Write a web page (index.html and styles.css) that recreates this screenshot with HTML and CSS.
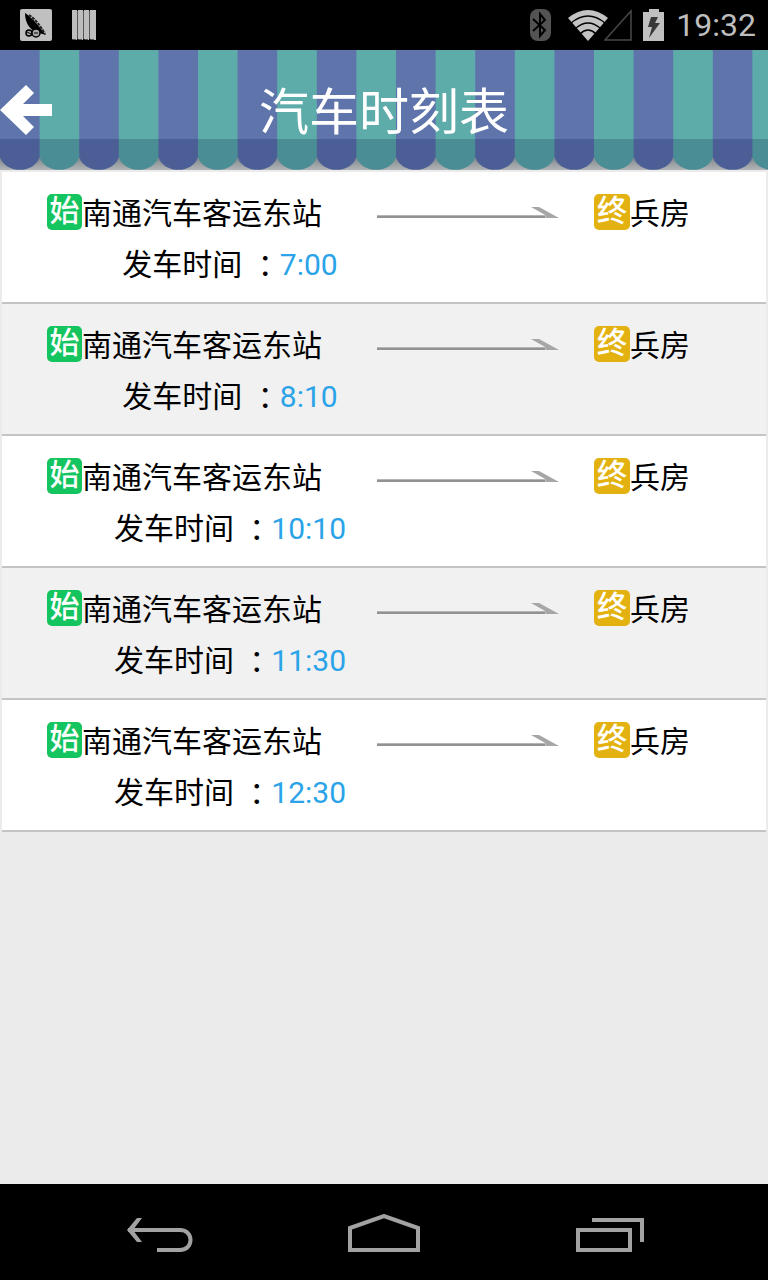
FILE: index.html
```html
<!DOCTYPE html>
<html lang="zh-CN">
<head>
<meta charset="utf-8">
<meta name="viewport" content="width=device-width, initial-scale=1">
<title>汽车时刻表</title>
<link rel="stylesheet" href="styles.css">
</head>
<body>
<svg class="defs" width="0" height="0" aria-hidden="true">
  <symbol id="arrow" viewBox="0 0 182 16">
    <path fill="#b4b4b4" d="M0 9H172V11H0z"/>
    <path fill="#929292" d="M0 10H168V12H0z"/>
    <path fill="#a6a6a6" d="M154 1H162L182 12H168L170 10z"/>
  </symbol>
</svg>

<div class="status">
  <div class="status-group">
    <svg class="icon-app" width="34" height="34" viewBox="0 0 34 34" aria-hidden="true">
      <rect x="1" y="1" width="32" height="32" rx="2" fill="#c0c0c0"/>
      <path fill="#000" d="M6 5C9 7 14 11 18 16L27 27 20 25C12 23 6 16 6 5z"/>
      <path fill="none" stroke="#222" stroke-width="2" stroke-dasharray="3 1" d="M10 7C16 11 21 17 26 26"/>
      <circle cx="10" cy="25" r="3" fill="#aaa" stroke="#000" stroke-width="1.5"/>
      <circle cx="17" cy="25" r="4" fill="#aaa" stroke="#000" stroke-width="1.5"/>
      <path stroke="#000" d="M8 24l4 2M15 25H19"/>
    </svg>
    <svg width="24" height="30" viewBox="0 0 24 30" aria-hidden="true">
      <path fill="#bdbdbd" d="M0 0H5V30H2L0 29zM6 0H11V30H8L6 29zM12 0H17V30H14L12 29zM18 0H24V30H20L18 29z"/>
      <path stroke="#555" d="M5.500 1V29M11.500 1V29M17.500 1V29M1 29.500H4M7 29.500H10M13 29.500H16M19 29.500H22"/>
    </svg>
  </div>
  <div class="status-group status-right">
    <svg class="icon-bt" width="22" height="32" viewBox="0 0 22 32" aria-hidden="true">
      <rect x="1" width="21" height="32" rx="8" fill="#535353"/>
      <path fill="none" stroke="#000" stroke-width="2" d="M4 10L16 21 11 27V5L16 11 4 22"/>
    </svg>
    <svg class="icon-wifi" width="40" height="32" viewBox="0 0 40 32" aria-hidden="true">
      <path fill="#c3c3c3" d="M0 9Q20-7 40 9L20 32z"/>
      <path fill="none" stroke="#000" stroke-width="1.500" d="M3 14Q20 0 37 14M8 19Q20 9 32 19M12 25Q20 17 28 25"/>
    </svg>
    <svg class="icon-signal" width="28" height="32" viewBox="0 0 28 32" aria-hidden="true">
      <path fill="none" stroke="#484848" stroke-width="1.500" d="M1 31L27 2V31z"/>
    </svg>
    <svg class="icon-battery" width="22" height="32" viewBox="0 0 22 32" aria-hidden="true">
      <path fill="#c0c0c0" d="M6 0H16V3H21V32H0V3H6z"/>
      <path fill="#383838" d="M8 8H15L12 14H17L6 29 9 18H5z"/>
    </svg>
    <span class="clock">19:32</span>
  </div>
</div>

<header class="header">
  <svg class="awning" viewBox="0 0 768 120" preserveAspectRatio="none" aria-hidden="true">
    <defs>
      <linearGradient id="shade" x1="0" y1="0" x2="0" y2="1">
        <stop offset="0" stop-color="#737b80"/><stop offset="1" stop-color="#b2b5b7"/>
      </linearGradient>
      <pattern id="stripes" width="79.2" height="120" patternUnits="userSpaceOnUse">
        <path fill="#5e74ab" d="M0 0H39.600V90H0z"/>
        <path fill="#5dacaa" d="M39.600 0H79.200V90H39.600z"/>
        <path fill="#4b5f96" d="M0 89H39.600V107A20.200 16 0 0 1 0 107z"/>
        <path fill="#4a8d95" d="M39.600 89H79.200V107A20.200 16 0 0 1 39.600 107z"/>
      </pattern>
    </defs>
    <rect y="104" width="768" height="16" fill="url(#shade)"/>
    <rect width="768" height="120" fill="url(#stripes)"/>
  </svg>
  <button class="back" type="button" aria-label="返回">
    <svg width="52" height="52" viewBox="0 0 52 52" aria-hidden="true">
      <path fill="#fff" d="M0 26L26 1 34 9 23 20H52V32H23L34 43 26 51z"/>
    </svg>
  </button>
  <h1 class="title">汽车时刻表</h1>
</header>

<main class="content">
  <ul class="list">
    <li class="row">
      <div class="place"><span class="badge start">始</span>南通汽车客运东站</div>
      <svg class="arrow" aria-hidden="true"><use href="#arrow"/></svg>
      <div class="place"><span class="badge end">终</span>兵房</div>
      <div class="depart">发车时间 <span class="colon">：</span><time>7:00</time></div>
    </li>
    <li class="row">
      <div class="place"><span class="badge start">始</span>南通汽车客运东站</div>
      <svg class="arrow" aria-hidden="true"><use href="#arrow"/></svg>
      <div class="place"><span class="badge end">终</span>兵房</div>
      <div class="depart">发车时间 <span class="colon">：</span><time>8:10</time></div>
    </li>
    <li class="row">
      <div class="place"><span class="badge start">始</span>南通汽车客运东站</div>
      <svg class="arrow" aria-hidden="true"><use href="#arrow"/></svg>
      <div class="place"><span class="badge end">终</span>兵房</div>
      <div class="depart">发车时间 <span class="colon">：</span><time>10:10</time></div>
    </li>
    <li class="row">
      <div class="place"><span class="badge start">始</span>南通汽车客运东站</div>
      <svg class="arrow" aria-hidden="true"><use href="#arrow"/></svg>
      <div class="place"><span class="badge end">终</span>兵房</div>
      <div class="depart">发车时间 <span class="colon">：</span><time>11:30</time></div>
    </li>
    <li class="row">
      <div class="place"><span class="badge start">始</span>南通汽车客运东站</div>
      <svg class="arrow" aria-hidden="true"><use href="#arrow"/></svg>
      <div class="place"><span class="badge end">终</span>兵房</div>
      <div class="depart">发车时间 <span class="colon">：</span><time>12:30</time></div>
    </li>
  </ul>
</main>

<nav class="navbar">
  <button type="button" aria-label="后退">
    <svg width="72" height="40" viewBox="0 0 72 40" aria-hidden="true">
      <path fill="none" stroke="#a2a2a2" stroke-width="4" d="M5 16H57C71 16 71 36 57 36H34"/>
      <path fill="#a2a2a2" d="M4 16L14 4H19L10 16 19 28H14z"/>
    </svg>
  </button>
  <button type="button" aria-label="主页">
    <svg width="72" height="40" viewBox="0 0 72 40" aria-hidden="true">
      <path fill="none" stroke="#a2a2a2" stroke-width="4" d="M2 36V14L36 2 70 14V36z"/>
    </svg>
  </button>
  <button type="button" aria-label="最近任务">
    <svg width="72" height="40" viewBox="0 0 72 40" aria-hidden="true">
      <path fill="none" stroke="#a2a2a2" stroke-width="4" d="M5 16H57V36H5zM19 6H69V28"/>
    </svg>
  </button>
</nav>
</body>
</html>
```
FILE: styles.css
```css
* {
  box-sizing: border-box;
}

body {
  margin: 0;
  min-height: 100vh;
  display: flex;
  flex-direction: column;
  background: #ebebeb;
  color: #000;
  font-family: Roboto, "Noto Sans CJK SC", sans-serif;
}

svg {
  display: block;
  flex: none;
}

.defs {
  position: absolute;
}

button {
  padding: 0;
  border: 0;
  background: none;
  cursor: pointer;
}

.status {
  display: flex;
  justify-content: space-between;
  align-items: center;
  height: 50px;
  padding: 0 12px 0 19px;
  background: #000;
}

.status-group {
  display: flex;
  align-items: center;
  gap: 19px;
}

.status-right {
  gap: 0;
}

.icon-bt {
  margin-right: 17px;
}

.icon-wifi {
  margin-right: -4px;
}

.icon-battery {
  margin: 0 11px;
}

.clock {
  color: #bebebe;
  font-size: 32px;
  line-height: 50px;
}

.header {
  position: relative;
  display: grid;
  align-items: center;
  height: 120px;
}

.awning {
  position: absolute;
  inset: 0;
  width: 100%;
  height: 100%;
}

.back,
.title {
  grid-area: 1 / 1;
  z-index: 1;
}

.back {
  justify-self: start;
}

.title {
  justify-self: center;
  margin: 0;
  padding-top: 6px;
  color: #fff;
  font-size: 50px;
  font-weight: 400;
  line-height: 74px;
}

.content {
  flex: 1;
  padding: 2px;
}

.list {
  margin: 0;
  padding: 0;
  list-style: none;
}

.row {
  display: grid;
  grid-template-columns: 276px 182px 1fr;
  column-gap: 54px;
  row-gap: 7px;
  align-items: center;
  padding: 20px 0 15px 45px;
  border-bottom: 2px solid #c4c4c4;
  background: #fff;
  font-size: 30px;
  line-height: 44px;
}

.row:nth-child(even) {
  background: #f1f1f1;
}

.place {
  display: flex;
  align-items: center;
  white-space: nowrap;
}

.badge {
  width: 36px;
  height: 36px;
  margin-bottom: 4px;
  flex: none;
  border-radius: 5px;
  color: #fff;
  font-size: 30px;
  font-weight: 500;
  line-height: 34px;
  text-align: center;
}

.start {
  width: 35px;
  background: #14c45e;
}

.end {
  background: #e3b211;
}

.arrow {
  width: 182px;
  height: 16px;
}

.row > .place:nth-child(3) {
  margin-left: -19px;
}

.depart {
  grid-column: 1 / -1;
  width: 366px;
  text-align: center;
  white-space: nowrap;
}

.colon {
  padding: 0 7px 0 8px;
  font-feature-settings: "halt";
}

.depart time {
  color: #2ba3e8;
}

.navbar {
  display: flex;
  justify-content: space-around;
  align-items: center;
  height: 96px;
  padding: 4px 46px 0;
  background: #000;
}
```
